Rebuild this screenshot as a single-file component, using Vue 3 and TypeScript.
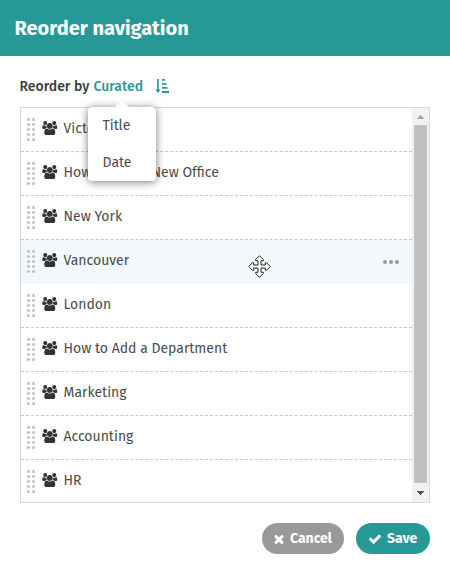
<script setup lang="ts">
interface Entry { title: string; active?: boolean }
const entries: Entry[] = [
  { title: 'Victoria' },
  { title: 'How to Add a New Office' },
  { title: 'New York' },
  { title: 'Vancouver', active: true },
  { title: 'London' },
  { title: 'How to Add a Department' },
  { title: 'Marketing' },
  { title: 'Accounting' },
  { title: 'HR' },
]
const dotRows = [1.5, 6.5, 11.5, 16.5, 21.5]
</script>

<template>
  <div class="dialog">
    <header class="header"><h1 class="heading">Reorder navigation</h1></header>
    <div class="sort">
      <span class="label">Reorder by</span>
      <span class="current">Curated
        <span class="menu">
          <span class="option">Title</span>
          <span class="option">Date</span>
        </span>
      </span>
      <svg class="sort-icon" viewBox="0 0 14 15">
        <path d="M2.1 0h1.7v10.6h1.9L2.9 14 .2 10.6h1.9zM7 0h3v1.8H7zM7 4h4.5v1.8H7zM7 8h5.5v1.8H7zM7 12h7v1.9H7z" />
      </svg>
    </div>
    <div class="list">
      <ul class="rows">
        <li v-for="e in entries" :key="e.title" class="row" :class="{ active: e.active }">
          <svg class="grip" viewBox="0 0 8 23">
            <template v-for="y in dotRows" :key="y">
              <circle cx="1.5" :cy="y" r="1.55" /><circle cx="6.5" :cy="y" r="1.55" />
            </template>
          </svg>
          <svg class="users" viewBox="0 0 1920 1792">
            <path d="M593 896q-162 5-265 128h-134q-82 0-138-40.500t-56-118.500q0-353 124-353 6 0 43.500 21t97.500 42.500 119 21.500q67 0 133-23-5 37-5 66 0 139 81 256zM1664 1533q0 120-73 189.500t-194 69.500h-874q-121 0-194-69.500t-73-189.500q0-53 3.500-103.500t14-109 26.500-108.500 43-97.500 62-81 85.500-53.500 111.500-20q10 0 43 21.500t73 48 107 48 135 21.500 135-21.500 107-48 73-48 43-21.500q61 0 111.500 20t85.500 53.500 62 81 43 97.500 26.500 108.500 14 109 3.500 103.500zM640 256q0 106-75 181t-181 75-181-75-75-181 75-181 181-75 181 75 75 181zM1344 640q0 159-112.500 271.500t-271.500 112.500-271.500-112.500-112.500-271.500 112.500-271.500 271.500-112.500 271.500 112.500 112.500 271.500zM1920 865q0 78-56 118.500t-138 40.500h-134q-103-123-265-128 81-117 81-256 0-29-5-66 66 23 133 23 59 0 119-21.500t97.500-42.500 43.500-21q124 0 124 353zM1792 256q0 106-75 181t-181 75-181-75-75-181 75-181 181-75 181 75 75 181z" />
          </svg>
          <span class="name">{{ e.title }}</span>
          <svg v-if="e.active" class="more" viewBox="0 0 16 4"><circle cx="2" cy="2" r="2" /><circle cx="8" cy="2" r="2" /><circle cx="14" cy="2" r="2" /></svg>
          <svg v-if="e.active" class="cursor" viewBox="0 0 23 23">
            <path d="M11.5.7L15.3 4.5V5.7H13V10H17.3V7.7H18.5L22.3 11.5L18.5 15.3H17.3V13H13V17.3H15.3V18.5L11.5 22.3L7.7 18.5V17.3H10V13H5.7V15.3H4.5L.7 11.5L4.5 7.7H5.7V10H10V5.7H7.7V4.5z" />
          </svg>
        </li>
      </ul>
      <div class="scrollbar">
        <svg class="arrow up" viewBox="0 0 7 4"><path d="M3 0h1v1h1v1h1v1h1v1H0V3h1V2h1V1h1z" /></svg>
        <div class="thumb"></div>
        <svg class="arrow down" viewBox="0 0 7 4"><path d="M0 0h7v1H6v1H5v1H4v1H3V3H2V2H1V1H0z" /></svg>
      </div>
    </div>
    <footer class="actions">
      <button class="button cancel">
        <svg viewBox="0 0 1792 1792"><path d="M1490 1322q0 40-28 68l-136 136q-28 28-68 28t-68-28l-294-294-294 294q-28 28-68 28t-68-28l-136-136q-28-28-28-68t28-68l294-294-294-294q-28-28-28-68t28-68l136-136q28-28 68-28t68 28l294 294 294-294q28-28 68-28t68 28l136 136q28 28 28 68t-28 68l-294 294 294 294q28 28 28 68z" /></svg>
        <span>Cancel</span>
      </button>
      <button class="button save">
        <svg viewBox="0 0 1792 1792"><path d="M1671 566q0 40-28 68l-724 724-136 136q-28 28-68 28t-68-28l-136-136-362-362q-28-28-28-68t28-68l136-136q28-28 68-28t68 28l294 295 656-657q28-28 68-28t68 28l136 136q28 28 28 68z" /></svg>
        <span>Save</span>
      </button>
    </footer>
  </div>
</template>

<style>
body { background: #fff; }
</style>
<style scoped>
.dialog { width: 450px; height: 574px; font-family: "Fira Sans", "Noto Sans", sans-serif; font-size: 14px; color: #4c4c4c; overflow: hidden; }
.header { height: 56px; background: #269996; display: flex; align-items: center; padding-left: 14.5px; }
.heading { margin: 0; font-size: 20px; font-weight: 700; line-height: 28px; color: #fff; white-space: nowrap; }
.sort { height: 51px; display: flex; padding: 21px 0 0 19.5px; box-sizing: border-box; line-height: 20px; font-weight: 500; white-space: nowrap; }
.label { width: 74px; color: #3c3c3c; }
.current { position: relative; width: 61.5px; color: #269996; }
.sort-icon { width: 14px; height: 15px; margin-top: 2px; fill: #269996; }
.menu { position: absolute; z-index: 2; left: -5.5px; top: 30px; width: 68px; height: 74px; box-sizing: border-box; padding: 9px 0 0 14.5px; background: #fff; border-radius: 4px; box-shadow: 0 1px 8px rgba(0, 0, 0, .55); color: #4c4c4c; font-weight: 400; }
.menu::before { content: ""; position: absolute; left: 27px; top: -7px; border: solid transparent; border-width: 0 7px 7px; border-bottom-color: #fff; }
.option { display: block; height: 37px; }
.list { width: 410px; height: 396px; margin-left: 20px; box-sizing: border-box; border: 1px solid #d8d8d8; display: flex; overflow: hidden; }
.rows { flex: none; width: 391px; margin: 0; padding: 0; list-style: none; }
.row { position: relative; height: 44px; box-sizing: border-box; display: flex; align-items: flex-start; padding-left: 6px; border-bottom: 1px dashed #c8c8c8; }
.row.active { background: #f3f8fd; border-bottom-color: transparent; }
.grip { width: 8px; height: 23px; margin-top: 10px; fill: #c4c4c4; }
.users { width: 15.5px; height: 14px; margin: 13px 0 0 7px; fill: #333; }
.name { margin: 11px 0 0 6px; line-height: 20px; white-space: nowrap; }
.more { width: 16px; height: 4px; margin: 20px 13px 0 auto; fill: #999; }
.cursor { position: absolute; left: 227px; top: 15px; width: 23px; height: 23px; fill: #fff; stroke: #222; stroke-width: 1; }
.scrollbar { flex: none; width: 17px; background: #f1f1f1; display: flex; flex-direction: column; align-items: center; }
.thumb { width: 13px; height: 358px; background: #c1c1c1; }
.arrow { width: 7px; height: 4px; }
.up { margin: 7px 0 6px; fill: #a3a3a3; }
.down { margin-top: 8px; fill: #505050; }
.actions { display: flex; justify-content: flex-end; gap: 12px; padding: 20px 20px 0 0; }
.button { height: 31px; padding: 0; border: 0; border-radius: 16px; display: flex; align-items: center; color: #fff; font: 700 14px/20px "Fira Sans", "Noto Sans", sans-serif; }
.button svg { width: 14px; height: 14px; fill: #fff; }
.cancel { width: 82px; background: #999; padding-left: 10px; }
.cancel span { margin-left: 4px; }
.save { width: 74px; background: #269996; padding-left: 12px; }
.save span { margin-left: 5px; }
</style>
